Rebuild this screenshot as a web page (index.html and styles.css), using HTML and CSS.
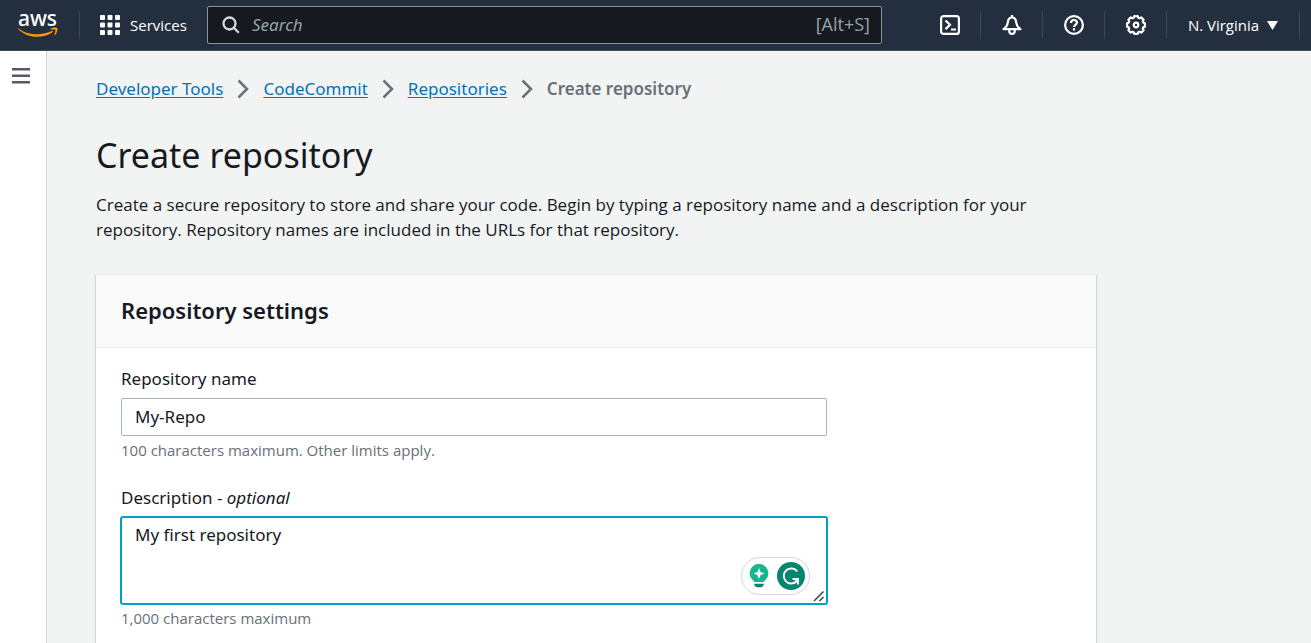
FILE: index.html
```html
<!DOCTYPE html>
<html lang="en">
<head>
<meta charset="utf-8">
<title>Create repository</title>
<link rel="stylesheet" href="styles.css">
</head>
<body>
<header class="topbar">
  <a class="logo" href="#" aria-label="AWS home">
    <span class="logo-word">aws</span>
    <svg class="logo-smile" width="40" height="11" viewBox="0 0 40 11" fill="#ff9900"><path d="M.6 1.400C6 5.600 12.500 7.200 19 7.200c5.200 0 10.600-1.200 15-3.200.9-.4 1.500.5.700 1.100C30.500 8.500 24.500 9.800 19 9.800 12 9.800 5.500 7.200.3 2.200-.3 1.500.1 1.100.6 1.400z"/><path d="M32.500 1.800c2-1.300 5.800-1.600 6.700-.8.800.9-.1 5-2.200 7-.5.400-.9.200-.7-.3.500-1.300 1.500-4.200 1-4.900-.5-.6-3.300-.3-4.500-.2-.6.1-.7-.5-.3-.8z"/></svg>
  </a>
  <button class="services" type="button">
    <svg width="20" height="20" viewBox="0 0 20 20" fill="#fff"><rect width="5" height="5" rx="1"/><rect x="7.500" width="5" height="5" rx="1"/><rect x="15" width="5" height="5" rx="1"/><rect y="7.500" width="5" height="5" rx="1"/><rect x="7.500" y="7.500" width="5" height="5" rx="1"/><rect x="15" y="7.500" width="5" height="5" rx="1"/><rect y="15" width="5" height="5" rx="1"/><rect x="7.500" y="15" width="5" height="5" rx="1"/><rect x="15" y="15" width="5" height="5" rx="1"/></svg>
    Services
  </button>
  <label class="search">
    <svg width="18" height="18" viewBox="0 0 18 18" fill="none" stroke="#d5dbdb" stroke-width="2.300"><circle cx="7.500" cy="7.500" r="6"/><path d="M11.800 11.800l5 5"/></svg>
    <input class="search-input" type="search" placeholder="Search" aria-label="Search">
    <span class="search-key">[Alt+S]</span>
  </label>
  <nav class="tools" aria-label="Account tools">
    <button class="tool" type="button" aria-label="CloudShell"><svg width="20" height="20" viewBox="0 0 20 20" fill="none" stroke="#fff" stroke-width="2.200"><rect x="1.100" y="1.100" width="17.800" height="17.800" rx="2.500"/><path d="M5.500 5.500l4.500 4.300-4.500 4.300M11 14.500h5"/></svg></button>
    <button class="tool" type="button" aria-label="Notifications"><svg width="20" height="20" viewBox="0 0 20 20" fill="none" stroke="#fff" stroke-width="2.200" stroke-linejoin="round"><path d="M10 0v2M1.500 14.200h17c-2.700-2-4-3.600-4.300-6.700C13.900 4.300 12.600 2.500 10 2.500S6.100 4.300 5.800 7.500c-.3 3.100-1.600 4.700-4.300 6.700zM7.300 15v1.200a2.700 2.700 0 0 0 5.400 0V15"/></svg></button>
    <button class="tool" type="button" aria-label="Help"><svg width="20" height="20" viewBox="0 0 20 20" fill="none" stroke="#fff" stroke-width="2.200"><circle cx="10" cy="10" r="8.900"/><path d="M7 8c0-4 6-3.800 6-.4 0 2.200-3 2.200-3 4.400M10 13.300v2.200"/></svg></button>
    <button class="tool" type="button" aria-label="Settings"><svg width="20" height="20" viewBox="0 0 20 20" fill="none" stroke="#fff" stroke-width="2.200" stroke-linejoin="round"><path d="M8.300 1.100h3.400l.6 1.600 1.200.5 1.700-.8 2.400 2.400-.8 1.700.5 1.200 1.600.6v3.400l-1.600.6-.5 1.200.8 1.700-2.400 2.400-1.700-.8-1.200.5-.6 1.600H8.300l-.6-1.600-1.200-.5-1.700.8-2.400-2.400.8-1.700-.5-1.200-1.600-.6V8.300l1.600-.6.5-1.200-.8-1.700 2.400-2.400 1.700.8 1.200-.5z"/><circle cx="10" cy="10" r="2.300"/></svg></button>
    <button class="region" type="button">N. Virginia <svg width="11" height="9" viewBox="0 0 11 9" fill="#fff"><path d="M0 0h11L5.500 9z"/></svg></button>
  </nav>
</header>
<div class="page">
  <aside class="rail">
    <button class="menu" type="button" aria-label="Open navigation"><svg width="18" height="16" viewBox="0 0 18 16" fill="#545b64"><path d="M0 0h18v2.500H0zM0 6.500h18V9H0zM0 13h18v2.500H0z"/></svg></button>
  </aside>
  <main class="content">
    <nav class="crumbs" aria-label="Breadcrumb">
      <a class="link" href="#">Developer Tools</a>
      <svg class="chevron" width="12" height="20" viewBox="0 0 12 20"><path d="M1.500 1.500l8.500 8.500-8.500 8.500"/></svg>
      <a class="link" href="#">CodeCommit</a>
      <svg class="chevron" width="12" height="20" viewBox="0 0 12 20"><path d="M1.500 1.500l8.500 8.500-8.500 8.500"/></svg>
      <a class="link" href="#">Repositories</a>
      <svg class="chevron" width="12" height="20" viewBox="0 0 12 20"><path d="M1.500 1.500l8.500 8.500-8.500 8.500"/></svg>
      <span class="current">Create repository</span>
    </nav>
    <h1 class="title">Create repository</h1>
    <p class="intro">Create a secure repository to store and share your code. Begin by typing a repository name and a description for your repository. Repository names are included in the URLs for that repository.</p>
    <section class="card">
      <div class="card-head"><h2 class="card-title">Repository settings</h2></div>
      <form class="form">
        <div class="field">
          <label class="label" for="name">Repository name</label>
          <input class="control" id="name" type="text" value="My-Repo">
          <p class="hint">100 characters maximum. Other limits apply.</p>
        </div>
        <div class="field">
          <label class="label" for="description">Description - <em>optional</em></label>
          <div class="area">
            <textarea class="control control-area" id="description" spellcheck="false">My first repository</textarea>
            <div class="assist">
              <svg width="20" height="24" viewBox="0 0 20 24"><path fill="#15b68e" d="M10 0a9.300 9.300 0 0 1 6.500 15.900c-1 .9-1.500 1.300-1.700 2.100H5.200c-.2-.8-.7-1.200-1.700-2.100A9.300 9.300 0 0 1 10 0z"/><path fill="#fff" d="M10 4l1.600 3.900 3.900 1.600-3.900 1.600L10 15l-1.600-3.900-3.900-1.600 3.900-1.600z"/><path fill="#078571" d="M5.200 19.800h9.600c0 2.300-1.200 3.500-3.300 3.500h-3c-2.100 0-3.300-1.200-3.300-3.500z"/></svg>
              <svg width="28" height="28" viewBox="0 0 28 28"><circle cx="14" cy="14" r="14" fill="#078571"/><path d="M20.300 9.500a7.500 7.500 0 1 0-1 10M15.500 17h5.500v5.500M21 17l-3.500 4" fill="none" stroke="#fff" stroke-width="1.900"/></svg>
            </div>
            <svg class="grip" width="12" height="12" viewBox="0 0 12 12" fill="none" stroke="#444" stroke-width="1.500"><path d="M1 11L10.500 1.500M6.500 11l4-4"/></svg>
          </div>
          <p class="hint">1,000 characters maximum</p>
        </div>
      </form>
    </section>
  </main>
</div>
</body>
</html>
```
FILE: styles.css
```css
* { box-sizing: border-box; }
body {
  margin: 0;
  min-height: 100vh;
  display: flex;
  flex-direction: column;
  background: #f2f3f3;
  color: #16191f;
  font: 17px/25px "Noto Sans", "Open Sans", sans-serif;
}
h1, h2, p { margin: 0; }
button { border: 0; padding: 0; background: none; color: inherit; font: inherit; }
svg { display: block; flex: none; }

.topbar {
  display: flex;
  align-items: center;
  height: 51px;
  background: #232f3e;
  border-bottom: 1px solid #414d5c;
  color: #fff;
  font-family: "Open Sans", "Noto Sans", sans-serif;
  font-size: 15px;
  font-weight: 500;
}
.logo {
  display: flex;
  flex-direction: column;
  align-items: center;
  width: 80px;
  height: 28px;
  padding-right: 4px;
  border-right: 1px solid #414750;
  color: #fff;
  text-decoration: none;
}
.logo-word { height: 16px; font: 500 21px/14px "Noto Sans", sans-serif; }
.services { display: flex; align-items: center; gap: 10px; width: 127px; padding-left: 20px; }
.search {
  display: flex;
  align-items: center;
  flex: 1;
  max-width: 675px;
  height: 38px;
  padding: 0 11px 0 14px;
  gap: 12px;
  background: #16191f;
  border: 1px solid #879596;
  border-radius: 2px;
  color: #95a5a6;
  font-family: "Noto Sans", sans-serif;
  font-size: 17px;
  font-weight: 400;
}
.search-input { flex: 1; min-width: 0; padding: 0 0 2px; border: 0; outline: 0; background: none; color: #fff; font: inherit; }
.search-input::placeholder { color: #95a5a6; font-style: italic; opacity: 1; }
.search-key { padding-bottom: 2px; font-size: 18px; font-family: "Open Sans", sans-serif; }
.tools { display: flex; margin-left: auto; margin-right: 11px; }
.tool, .region { display: flex; align-items: center; justify-content: center; height: 28px; border-right: 1px solid #414750; }
.tool { width: 62px; }
.region { width: 133px; gap: 8px; }

.page { display: flex; flex: 1; }
.rail { width: 47px; background: #fff; border-right: 1px solid #d0d5d5; }
.menu { display: block; padding: 17px 12px; }
.content { flex: 1; display: flex; flex-direction: column; max-width: 1050px; padding: 25px 0 0 48px; }

.crumbs { display: flex; align-items: center; gap: 14px; padding-left: 1px; }
.link { color: #0073bb; text-decoration: underline; text-underline-offset: 2px; }
.chevron { fill: none; stroke: #687078; stroke-width: 2.5; }
.current { color: #687078; font-weight: 600; }
.title { margin-top: 32px; padding-left: 1px; font-size: 34px; line-height: 44px; font-weight: 400; }
.intro { margin-top: 15px; padding-left: 1px; max-width: 960px; font-family: "Open Sans", "Noto Sans", sans-serif; }

.card { flex: 1; margin-top: 32px; background: #fff; border: 1px solid #d5dbdb; border-top-color: #eaeded; border-bottom: 0; box-shadow: 0 1px 1px rgba(0, 28, 36, .2); }
.card-head { padding: 19px 25px 21px; background: #fafafa; border-bottom: 1px solid #eaeded; }
.card-title { font-size: 22px; line-height: 32px; font-weight: 600; }
.form { display: flex; flex-direction: column; gap: 24px; max-width: 756px; padding: 18px 25px 10px; }
.label { display: block; margin-bottom: 7px; }
.control { display: block; width: 100%; height: 38px; padding: 5px 13px 7px; border: 1px solid #aab7b8; border-radius: 2px; background: #fff; color: inherit; font: inherit; }
.area { position: relative; }
.control-area { height: 87px; padding-top: 4px; resize: none; border-color: #00a1c9; outline: 0; box-shadow: 0 0 0 1px #00a1c9; }
.assist { position: absolute; right: 17px; bottom: 9px; display: flex; align-items: center; gap: 8px; height: 38px; padding: 0 4px 0 7px; border: 1px solid #d5d6e3; border-radius: 19px; background: #fff; }
.grip { position: absolute; right: 2px; bottom: 2px; }
.hint { margin-top: 3px; color: #687078; font-family: "Open Sans", "Noto Sans", sans-serif; font-size: 15px; line-height: 22px; }
```
